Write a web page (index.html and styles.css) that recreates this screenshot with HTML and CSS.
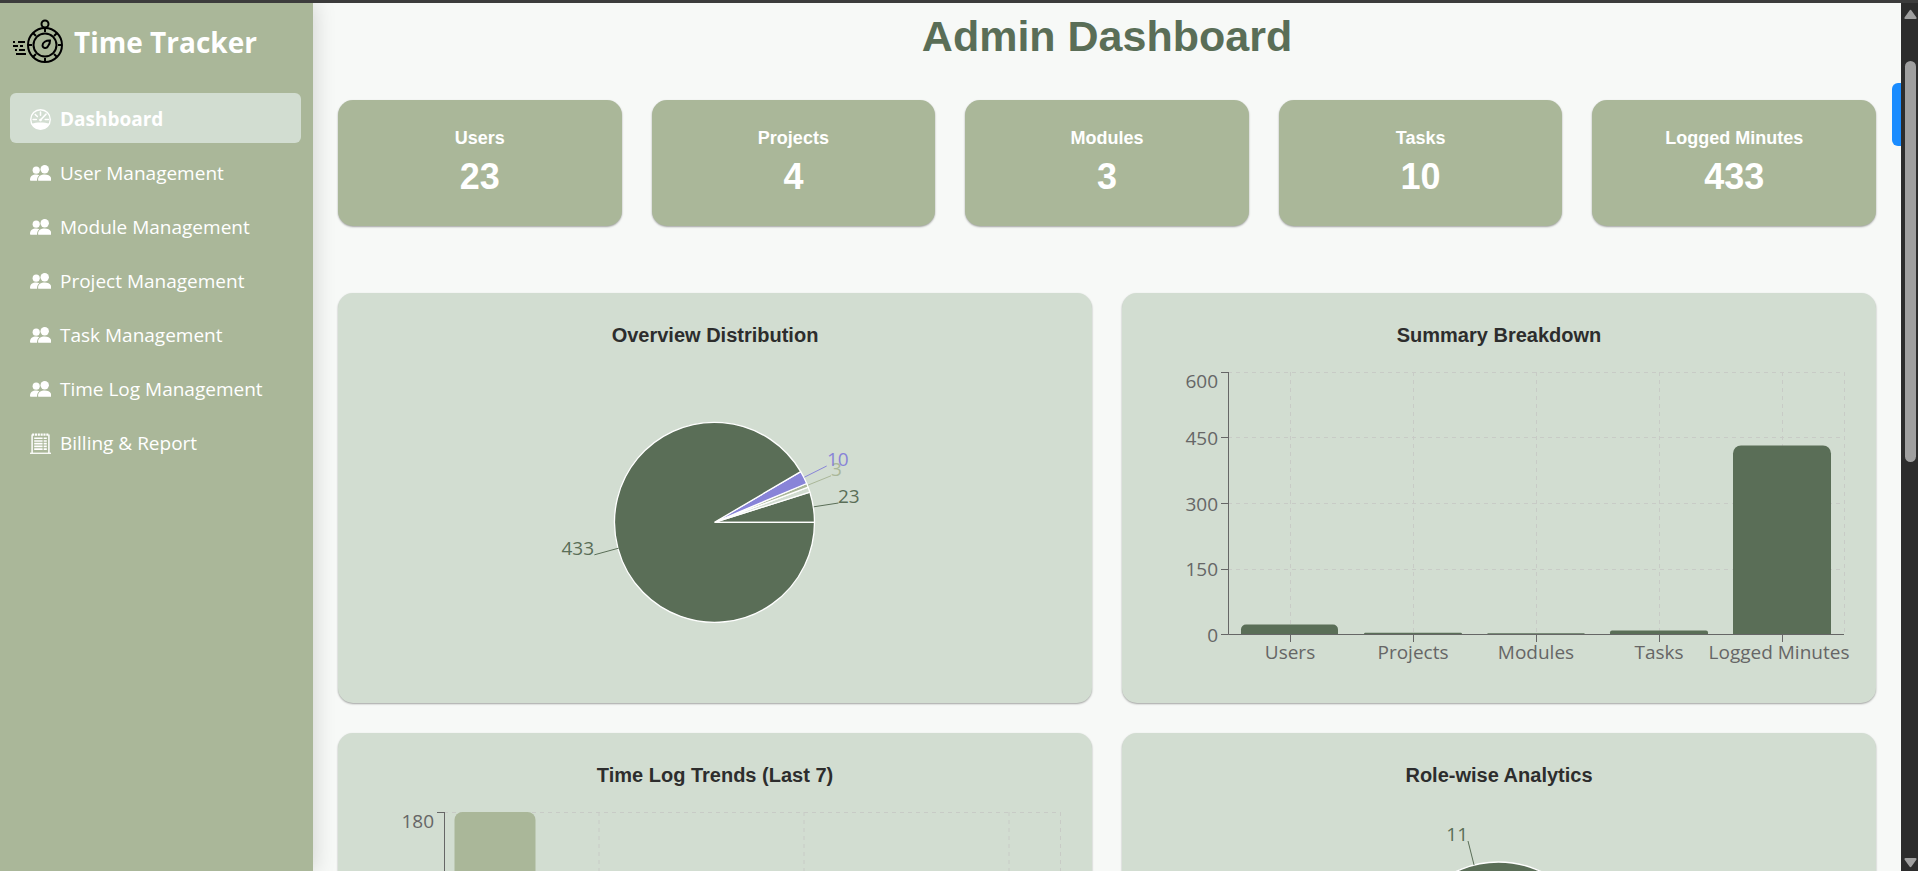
FILE: index.html
```
<!DOCTYPE html>
<html lang="en">
<head>
<meta charset="utf-8">
<title>Time Tracker - Admin Dashboard</title>
<meta name="viewport" content="width=device-width, initial-scale=1">
<link rel="stylesheet" href="styles.css">
</head>
<body>
<svg class="symbols" aria-hidden="true">
  <symbol id="people" viewBox="0 0 20 20">
    <circle cx="5.9" cy="6.8" r="3.4"/><circle cx="14" cy="6" r="4"/>
    <path d="M0 16.2C0 12.6 2.4 11 5.9 11c1.2 0 2.2.2 3 .6C7.300 12.900 6.700 14.500 6.700 16.900H.7C.3 16.900 0 16.600 0 16.200zM7.700 16.100C7.700 12.600 10.300 11 14 11s6.400 1.700 6.400 5.200c0 .5-.3.800-.8.800H8.500c-.5 0-.8-.4-.8-.9z"/>
  </symbol>
</svg>
<div class="window">
  <aside class="sidebar">
    <div class="brand">
      <svg class="logo" viewBox="0 0 52 46" fill="none" stroke="#000" stroke-width="2" aria-hidden="true">
        <circle cx="33" cy="26" r="17"/><circle cx="33" cy="26" r="11.500"/>
        <circle cx="33" cy="5" r="3.500"/>
        <path d="M33 9v4M33 39v4M16 26h4M46 26h4M21 14l3 3M45 14l-3 3M21 38l3-3M45 38l-3-3"/>
        <path d="M38 21.500c-4-.3-7.500 2-7.500 5a2.800 2.800 0 0 0 5.300 1C37 26 38.200 24 38 21.500z"/>
        <path d="M1 23h2M6 23h7M1 27h5M8 27h3M3 31h2M7 31h6M4 35h10"/>
      </svg>
      <span class="brand-name">Time Tracker</span>
    </div>
    <nav class="nav">
      <a class="nav-link active" href="#">
        <svg class="icon" viewBox="0 0 20 20" aria-hidden="true"><circle cx="10" cy="10" r="9.300" fill="none" stroke="currentColor" stroke-width="1.300"/><path d="M1.500 14C4 13.300 7 12.800 10 12.800s6 .5 8.500 1.200A9.500 9.500 0 0 1 1.500 14z"/><path d="M10 3v3M3 10h3M14.500 10h3M5 5.200l2 2M15.300 4.900L10 10.500" fill="none" stroke="currentColor" stroke-width="1.500" stroke-linecap="round"/><circle cx="10" cy="10.500" r="1.300"/></svg>
        <span>Dashboard</span></a>
      <a class="nav-link" href="#"><svg class="icon" aria-hidden="true"><use href="#people"/></svg><span>User Management</span></a>
      <a class="nav-link" href="#"><svg class="icon" aria-hidden="true"><use href="#people"/></svg><span>Module Management</span></a>
      <a class="nav-link" href="#"><svg class="icon" aria-hidden="true"><use href="#people"/></svg><span>Project Management</span></a>
      <a class="nav-link" href="#"><svg class="icon" aria-hidden="true"><use href="#people"/></svg><span>Task Management</span></a>
      <a class="nav-link" href="#"><svg class="icon" aria-hidden="true"><use href="#people"/></svg><span>Time Log Management</span></a>
      <a class="nav-link" href="#">
        <svg class="icon" viewBox="0 0 20 20" fill="none" stroke="currentColor" aria-hidden="true"><path d="M2 19V1.500M18 19V1.500" stroke-width="1.400"/><path d="M0 19.300h20.500" stroke-width="1.200"/><path d="M2 1.500h16" stroke-width="2" stroke-dasharray="2 .7"/><path d="M4 5h8M13 5h3M4 7.600h8M13 7.600h3M4 10.200h8M13 10.200h3M4 12.800h8M13 12.800h3M4 15.400h8M13 15.400h3" stroke-width="1.600"/></svg>
        <span>Billing &amp; Report</span></a>
    </nav>
  </aside>

  <main class="main">
    <h1 class="page-title">Admin Dashboard</h1>
    <section class="stats" aria-label="Totals">
      <div class="stat"><h2 class="stat-label">Users</h2><p class="stat-value">23</p></div>
      <div class="stat"><h2 class="stat-label">Projects</h2><p class="stat-value">4</p></div>
      <div class="stat"><h2 class="stat-label">Modules</h2><p class="stat-value">3</p></div>
      <div class="stat"><h2 class="stat-label">Tasks</h2><p class="stat-value">10</p></div>
      <div class="stat"><h2 class="stat-label">Logged Minutes</h2><p class="stat-value">433</p></div>
    </section>

    <section class="charts" aria-label="Charts">
      <article class="panel">
        <h2 class="panel-title">Overview Distribution</h2>
        <svg class="chart" viewBox="0 0 754 350" role="img" aria-label="Overview distribution pie chart">
          <g class="slices" transform="translate(-.5 .3)">
            <path class="dark" d="M377 169L477 169A100 100 0 0 0 472.400 138.900Z"/>
            <path class="pale" d="M377 169L472.400 138.900A100 100 0 0 0 470.600 133.900Z"/>
            <path class="sage" d="M377 169L470.600 133.900A100 100 0 0 0 469.200 130.200Z"/>
            <path class="violet" d="M377 169L469.200 130.200A100 100 0 0 0 463.200 118.300Z"/>
            <path class="dark" d="M377 169L463.200 118.300A100 100 0 1 0 477 169Z"/>
          </g>
          <g class="leads">
            <path class="dark-line" d="M475.800 153.800L500.500 150"/>
            <path class="sage-line" d="M470 132.100L493 122.800"/>
            <path class="violet-line" d="M466.400 124.200L488.700 113"/>
            <path class="dark-line" d="M280.500 195.200L256.400 201.800"/>
          </g>
          <text class="dark" x="500" y="150">23</text>
          <text class="sage" x="493" y="123">3</text>
          <text class="violet" x="489" y="113">10</text>
          <text class="dark end" x="256" y="202">433</text>
        </svg>
      </article>

      <article class="panel">
        <h2 class="panel-title">Summary Breakdown</h2>
        <svg class="chart" viewBox="0 0 754 350" role="img" aria-label="Summary breakdown bar chart">
          <path class="grid" d="M106 19.500H722M106 84.500H722M106 150.500H722M106 216.500H722M168.500 19V281M291.500 19V281M414.500 19V281M537.500 19V281M660.500 19V281M722.500 19V281"/>
          <g class="dark">
            <path d="M119 281.500v-5a5 5 0 0 1 5-5h87a5 5 0 0 1 5 5v5z"/>
            <path d="M242 281.500v-1l1-.8h96l1 .8v1z"/>
            <path d="M365 281.500v-.6l1-.6h96l1 .6v.6z"/>
            <path d="M488 281.500v-2a2 2 0 0 1 2-2h94a2 2 0 0 1 2 2v2z"/>
            <path d="M611 281.500v-181a8 8 0 0 1 8-8h82a8 8 0 0 1 8 8v181z"/>
          </g>
          <path class="axis" d="M106.500 19V281.500H722M99 19.500h7.500M99 84.500h7.500M99 150.500h7.500M99 216.500h7.500M99 281.500h7.500M168.500 281v8M291.500 281v8M414.500 281v8M537.500 281v8M660.500 281v8"/>
          <g class="ticks end"><text x="96" y="35">600</text><text x="96" y="92">450</text><text x="96" y="158">300</text><text x="96" y="223">150</text><text x="96" y="289">0</text></g>
          <g class="ticks mid"><text x="168" y="306">Users</text><text x="291" y="306">Projects</text><text x="414" y="306">Modules</text><text x="537" y="306">Tasks</text><text x="657" y="306">Logged Minutes</text></g>
        </svg>
      </article>

      <article class="panel">
        <h2 class="panel-title">Time Log Trends (Last 7)</h2>
        <svg class="chart" viewBox="0 0 754 350" role="img" aria-label="Time log trends bar chart">
          <path class="grid" d="M106 19.500H722M261 19V281M466 19V281M671 19V281M722.500 19V281"/>
          <path class="sage" d="M116.500 281.500V27a8 8 0 0 1 8-8h65a8 8 0 0 1 8 8V281.500z"/>
          <path class="axis" d="M106.500 19V281.500H722M99 19.500h7.500"/>
          <g class="ticks end"><text x="96" y="35">180</text></g>
        </svg>
      </article>

      <article class="panel">
        <h2 class="panel-title">Role-wise Analytics</h2>
        <svg class="chart" viewBox="0 0 754 350" role="img" aria-label="Role-wise analytics pie chart">
          <g class="slices"><circle class="dark" cx="376.500" cy="169" r="100"/></g>
          <path class="dark-line" d="M352.100 72.200L346 48"/>
          <text class="dark end" x="346" y="48">11</text>
        </svg>
      </article>
    </section>
    <button class="side-handle" type="button" aria-label="Open panel"></button>
  </main>

  <div class="scrollbar" aria-hidden="true">
    <svg class="arrow" viewBox="0 0 13 11"><path d="M5.500 1.500q1-1.500 2 0l5 7q.5 1.500-1 1.500h-10q-1.500 0-1-1.500z"/></svg>
    <div class="track"><div class="thumb"></div></div>
    <svg class="arrow" viewBox="0 0 13 11"><path d="M5.500 9.500q1 1.500 2 0l5-7q.5-1.500-1-1.500h-10q-1.500 0-1 1.500z"/></svg>
  </div>
</div>
</body>
</html>
```
FILE: styles.css
```
* { box-sizing: border-box; }
body {
  margin: 0;
  background: #f7f9f7;
  font-family: "Liberation Sans", Arial, sans-serif;
  color: #2d2d2d;
}
h1, h2, p { margin: 0; }
.symbols { display: none; }

.window {
  display: flex;
  height: 100vh;
  overflow: hidden;
  border-top: 3px solid #3c3c3c;
}

.sidebar {
  flex: none;
  width: 313px;
  padding: 11px 12px 10px 10px;
  background: #aab799;
  color: #fff;
  font-family: "Open Sans", "Noto Sans", sans-serif;
  box-shadow: 2px 0 20px rgba(0, 0, 0, 0.15);
  z-index: 1;
}
.brand {
  display: flex;
  align-items: center;
  gap: 10px;
  height: 56px;
  margin-bottom: 23px;
  padding-left: 2px;
}
.logo { width: 52px; height: 46px; }
.brand-name { font-size: 28px; font-weight: 700; line-height: 40px; }
.nav { display: flex; flex-direction: column; gap: 4px; }
.nav-link {
  display: flex;
  align-items: center;
  gap: 9px;
  height: 50px;
  padding: 2px 20px 0;
  border-radius: 6px;
  color: #fff;
  font-size: 19px;
  text-decoration: none;
  white-space: nowrap;
}
.nav-link.active { background: #d2ddd1; font-weight: 700; }
.icon { flex: none; width: 21px; height: 21px; fill: currentColor; }
.icon[fill="none"] { fill: none; }

.main {
  position: relative;
  flex: 1;
  min-width: 0;
  padding: 8px 25px 25px;
  overflow: hidden;
}
.page-title {
  margin-bottom: 39px;
  color: #5a6e57;
  font-size: 43px;
  line-height: 50px;
  text-align: center;
}
.stats {
  display: grid;
  grid-template-columns: repeat(5, 1fr);
  gap: 30px;
  margin-bottom: 67px;
}
.stat {
  padding: 25px 20px 24px;
  border-radius: 15px;
  background: #aab799;
  color: #fff;
  text-align: center;
  box-shadow: 0 1px 2px rgba(0, 0, 0, 0.35);
}
.stat-label { font-size: 18px; line-height: 26px; }
.stat-value { font-size: 36px; font-weight: 700; line-height: 51px; }

.charts {
  display: grid;
  grid-template-columns: repeat(2, 1fr);
  gap: 30px;
}
.panel {
  padding-top: 30px;
  border-radius: 15px;
  background: #d2ddd1;
  box-shadow: 0 1px 2px rgba(0, 0, 0, 0.35);
}
.panel-title { font-size: 20px; line-height: 24px; text-align: center; padding-bottom: 6px; }
.chart { display: block; width: 100%; font-family: "Open Sans", "Noto Sans", sans-serif; font-size: 19px; }
.dark { fill: #5a6e57; }
.pale { fill: #d2ddd1; }
.sage { fill: #aab799; }
.violet { fill: #8884d8; }
.slices { stroke: #fff; stroke-width: 1.3; stroke-linejoin: bevel; }
.dark-line { stroke: #5a6e57; }
.sage-line { stroke: #aab799; }
.violet-line { stroke: #8884d8; }
.grid { fill: none; stroke: #c8cbc6; stroke-dasharray: 4 4; }
.axis { fill: none; stroke: #666; }
.ticks { fill: #666; }
.end { text-anchor: end; }
.mid { text-anchor: middle; }

.side-handle {
  position: absolute;
  top: 80px;
  right: 0;
  width: 9px;
  height: 63px;
  padding: 0;
  border: 0;
  border-radius: 6px 0 0 6px;
  background: #1a8cff;
}

.scrollbar {
  flex: none;
  display: flex;
  flex-direction: column;
  align-items: center;
  width: 17px;
  padding: 6px 0 3px 2px;
  background: #2c2c2c;
}
.arrow { flex: none; width: 13px; height: 11px; fill: #9f9f9f; }
.track { flex: 1; width: 11px; padding-top: 41px; }
.thumb { height: 401px; border-radius: 6px; background: #9f9f9f; }
```
